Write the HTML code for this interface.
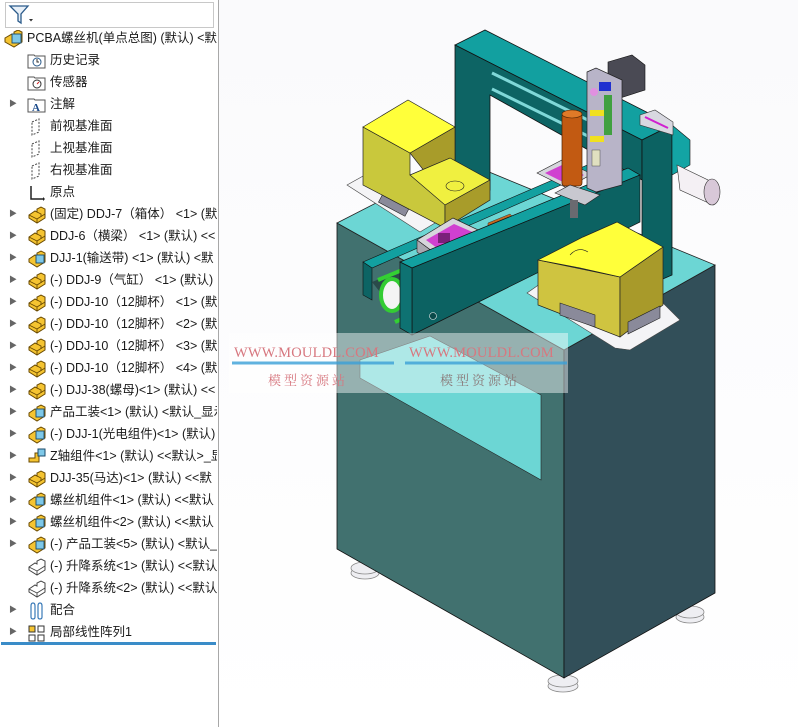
<!DOCTYPE html>
<html><head><meta charset="utf-8"><style>
html,body{margin:0;padding:0;width:798px;height:727px;overflow:hidden;background:#fff;}
body{position:relative;font-family:"Liberation Sans","Noto Sans CJK SC",sans-serif;}
#tree{position:absolute;left:0;top:0;width:218px;height:727px;background:#fff;border-right:1px solid #a8a8a8;}
#view{position:absolute;left:219px;top:0;width:579px;height:727px;background:linear-gradient(#fafafc,#ffffff);}
.filter{position:absolute;left:5px;top:2px;width:207px;height:24px;border:1px solid #c8c8c8;background:#fff;}
.row{position:absolute;left:0;height:22px;line-height:22px;font-size:12.5px;color:#1a1a1a;white-space:nowrap;width:217px;overflow:hidden;}
.row .t{position:absolute;top:0;}
.row .ar{position:absolute;left:9px;top:0;font-size:8px;color:#666;}
.row svg{position:absolute;top:3px;}
.wm{position:absolute;font-family:"Liberation Serif","Noto Serif CJK SC",serif;color:#d7777f;}
</style></head><body>
<div id="view">
<svg width="579" height="727" viewBox="219 0 579 727" style="position:absolute;left:0;top:0">
<g fill="#eeeef2" stroke="#888" stroke-width="0.8">
<ellipse cx="365" cy="573" rx="14" ry="6"/><ellipse cx="365" cy="568" rx="14" ry="6"/>
<ellipse cx="563" cy="686" rx="15" ry="6"/><ellipse cx="563" cy="681" rx="15" ry="6"/>
<ellipse cx="690" cy="617" rx="14" ry="6"/><ellipse cx="690" cy="612" rx="14" ry="6"/>
</g>
<polygon points="337,223 564,350 564,678 337,549" fill="#41716f" stroke="#111" stroke-width="0.8"/>
<polygon points="564,350 715,265 715,593 564,678" fill="#324f59" stroke="#111" stroke-width="0.8"/>
<polygon points="337,223 460,160 715,265 564,350" fill="#6cd6d4" stroke="#222" stroke-width="0.8"/>
<polygon points="360,378 541,480 541,395 430,336 360,360" fill="#6cd6d4" stroke="#222" stroke-width="0.6"/>
<polygon points="455,45 485,30 672,125 642,140" fill="#12a0a0" stroke="#111" stroke-width="0.8"/>
<polygon points="455,45 642,140 642,180 490,95 490,190 455,175" fill="#0d6464" stroke="#111" stroke-width="0.8"/>
<line x1="492" y1="73" x2="600" y2="126" stroke="#7fd8d8" stroke-width="3"/>
<line x1="492" y1="89" x2="600" y2="142" stroke="#7fd8d8" stroke-width="3"/>
<polygon points="642,140 672,125 672,275 642,288" fill="#0c6262" stroke="#111" stroke-width="0.8"/>
<polygon points="672,125 690,140 690,165 672,175" fill="#13a4a4" stroke="#111" stroke-width="0.6"/>
<polygon points="640,115 655,110 673,122 673,135 640,125" fill="#d8d8e0" stroke="#333" stroke-width="0.6"/>
<line x1="645" y1="117" x2="668" y2="128" stroke="#d020d0" stroke-width="2"/>
<polygon points="677,165 708,180 713,205 680,190" fill="#f4f0f4" stroke="#333" stroke-width="0.6"/>
<ellipse cx="712" cy="192" rx="8" ry="13" fill="#d8c8d8" stroke="#333" stroke-width="0.6"/>
<polygon points="347,185 365,175 440,220 420,232" fill="#f4f4f6" stroke="#444" stroke-width="0.6"/>
<rect x="380" y="196" width="30" height="14" fill="#8a8a9a" stroke="#222" stroke-width="0.6" transform="rotate(28 395 203)"/>
<polygon points="363,127 410,153 410,175 445,197 445,228 363,185" fill="#c9c83c" stroke="#222" stroke-width="0.7"/>
<polygon points="410,153 455,127 455,160 425,172" fill="#a89c2a" stroke="#222" stroke-width="0.7"/>
<polygon points="410,175 450,158 490,180 445,205" fill="#f0f040" stroke="#222" stroke-width="0.7"/>
<polygon points="445,205 490,180 490,200 445,228" fill="#a89c2a" stroke="#222" stroke-width="0.7"/>
<polygon points="363,127 408,100 455,127 410,153" fill="#ffff3a" stroke="#222" stroke-width="0.7"/>
<ellipse cx="455" cy="186" rx="9" ry="5" fill="none" stroke="#222" stroke-width="0.6"/>
<polygon points="363,262 592,163 600,168 372,268" fill="#12a0a0" stroke="#111" stroke-width="0.6"/>
<polygon points="363,262 372,268 372,300 363,295" fill="#0d6464" stroke="#111" stroke-width="0.6"/>
<polygon points="372,282 622,182 628,192 380,292" fill="#2a4a4a"/>
<line x1="378" y1="280" x2="625" y2="178" stroke="#33d033" stroke-width="4"/>
<line x1="395" y1="322" x2="630" y2="218" stroke="#33d033" stroke-width="4"/>
<ellipse cx="392" cy="295" rx="11" ry="16" fill="#f4f4f4" stroke="#33cc33" stroke-width="4"/>
<polygon points="417,240 453,218 493,237 448,263" fill="#d6d6dc" stroke="#222" stroke-width="0.7"/>
<polygon points="426,240 454,224 484,237 448,256" fill="#d040d0"/>
<polygon points="417,240 448,263 448,275 417,252" fill="#a8a8b0" stroke="#222" stroke-width="0.6"/>
<polygon points="448,263 493,237 493,249 448,275" fill="#8a8a94" stroke="#222" stroke-width="0.6"/>
<rect x="438" y="233" width="12" height="10" fill="#7a207a"/>
<polygon points="488,223 510,214 516,220 516,236 494,244 488,238" fill="#c66a22" stroke="#333" stroke-width="0.5"/>
<polygon points="537,173 562,160 592,174 567,188" fill="#d6d6dc" stroke="#222" stroke-width="0.6"/>
<polygon points="545,173 562,165 584,175 567,184" fill="#d040d0"/>
<polygon points="400,262 628,168 640,175 412,268" fill="#12a0a0" stroke="#111" stroke-width="0.7"/>
<polygon points="412,268 640,175 640,222 412,335" fill="#0c6262" stroke="#111" stroke-width="0.7"/>
<polygon points="400,262 412,268 412,335 400,328" fill="#0e7272" stroke="#111" stroke-width="0.7"/>
<circle cx="433" cy="316" r="3.5" fill="#0a4a4a" stroke="#eee" stroke-width="0.6"/>
<polygon points="608,62 632,55 645,65 645,90 620,98 608,90" fill="#4a4a54" stroke="#111" stroke-width="0.6"/>
<polygon points="587,72 596,68 622,80 622,185 596,192 587,188" fill="#b8b4c8" stroke="#222" stroke-width="0.7"/>
<rect x="599" y="82" width="12" height="9" fill="#2030d0"/>
<rect x="590" y="110" width="14" height="6" fill="#f0e020"/>
<rect x="590" y="136" width="14" height="6" fill="#f0e020"/>
<rect x="604" y="95" width="8" height="40" fill="#40a040"/>
<circle cx="594" cy="92" r="4" fill="#e090e0"/>
<rect x="592" y="150" width="8" height="16" fill="#e0e0c0" stroke="#333" stroke-width="0.4"/>
<rect x="562" y="113" width="20" height="73" rx="3" fill="#c25a12" stroke="#4a2000" stroke-width="0.7"/>
<ellipse cx="572" cy="114" rx="10" ry="4" fill="#e07a28" stroke="#4a2000" stroke-width="0.6"/>
<polygon points="555,193 570,185 600,195 585,205" fill="#c8c8d0" stroke="#222" stroke-width="0.6"/>
<rect x="570" y="200" width="8" height="18" fill="#6a6a70"/>
<polygon points="527,293 615,348 630,350 680,320 660,300 560,270" fill="#f4f4f6" stroke="#444" stroke-width="0.6"/>
<polygon points="538,260 620,277 620,337 538,305" fill="#cfc440" stroke="#222" stroke-width="0.7"/>
<polygon points="620,277 663,247 663,305 620,337" fill="#a89a2a" stroke="#222" stroke-width="0.7"/>
<polygon points="538,260 583,237 617,222 663,247 620,277 580,268" fill="#ffff3a" stroke="#222" stroke-width="0.7"/>
<path d="M570,255 Q578,246 588,252" fill="none" stroke="#222" stroke-width="0.6"/>
<polygon points="560,303 595,315 595,327 560,315" fill="#8a8a9a" stroke="#222" stroke-width="0.6"/>
<polygon points="628,322 660,306 660,318 628,334" fill="#8a8a9a" stroke="#222" stroke-width="0.6"/>
<rect x="229" y="333" width="339" height="60" fill="#ffffff" fill-opacity="0.45"/>
<line x1="232" y1="363" x2="394" y2="363" stroke="#3aa0d8" stroke-width="3" opacity="0.8"/>
<line x1="405" y1="363" x2="567" y2="363" stroke="#3aa0d8" stroke-width="3" opacity="0.8"/>
</svg>
<div class="wm" style="left:15px;top:345px;font-size:14.5px;letter-spacing:0.2px">WWW.MOULDL.COM</div>
<div class="wm" style="left:190px;top:345px;font-size:14.5px;letter-spacing:0.2px">WWW.MOULDL.COM</div>
<div class="wm" style="left:49px;top:370px;font-size:13px;letter-spacing:3px">模型资源站</div>
<div class="wm" style="left:221px;top:370px;font-size:13px;letter-spacing:3px;color:#8a7878">模型资源站</div>
</div>

<div id="tree">
<div class="filter"><svg width="26" height="24" style="position:absolute;left:2px;top:0px"><path d="M2,3 H20 L13,11 V20 L10,18 V11 Z" fill="#e8f0f8" stroke="#2a5a8a" stroke-width="1.3"/><path d="M21,16 l4,0 l-2,2.5z" fill="#333"/></svg></div>
<div id="rows"></div>
<div style="position:absolute;left:1px;top:642px;width:215px;height:3px;background:#3a8cc8"></div>
</div>

<script>
var items=[
["PCBA螺丝机(单点总图)  (默认)  <默",0,"asmb",0],
["历史记录",1,"hist",0],["传感器",1,"sens",0],["注解",1,"anno",1],
["前视基准面",1,"plane",0],["上视基准面",1,"plane",0],["右视基准面",1,"plane",0],["原点",1,"orig",0],
["(固定) DDJ-7（箱体） <1> (默认",1,"part",1],["DDJ-6（横梁） <1> (默认) <<",1,"part",1],
["DJJ-1(输送带) <1> (默认) <默",1,"asm",1],["(-) DDJ-9（气缸） <1> (默认)",1,"part",1],
["(-) DDJ-10（12脚杯） <1> (默",1,"part",1],["(-) DDJ-10（12脚杯） <2> (默",1,"part",1],
["(-) DDJ-10（12脚杯） <3> (默",1,"part",1],["(-) DDJ-10（12脚杯） <4> (默",1,"part",1],
["(-) DJJ-38(螺母)<1> (默认) <<",1,"part",1],["产品工装<1> (默认) <默认_显示",1,"asm",1],
["(-) DJJ-1(光电组件)<1> (默认)",1,"asm",1],["Z轴组件<1> (默认) <<默认>_显",1,"zax",1],
["DJJ-35(马达)<1> (默认) <<默",1,"part",1],["螺丝机组件<1> (默认) <<默认",1,"asm",1],
["螺丝机组件<2> (默认) <<默认",1,"asm",1],["(-) 产品工装<5> (默认) <默认_",1,"asm",1],
["(-) 升降系统<1> (默认) <<默认",1,"wire",0],["(-) 升降系统<2> (默认) <<默认",1,"wire",0],
["配合",1,"mate",1],["局部线性阵列1",1,"pat",1]];
var ic={
part:'<path d="M2,9 L8,5 L10,6 L10,3 L14,1 L18,3 L18,12 L10,17 L2,12 Z" fill="#f5c431" stroke="#6a4a00" stroke-width="1"/><path d="M2,9 L10,13 L10,17 M10,13 L18,8 M10,6 L14,8 L14,11" fill="none" stroke="#6a4a00" stroke-width="0.9"/>',
asm:'<path d="M2,9 L8,5 L10,6 L10,3 L14,1 L18,3 L18,12 L10,17 L2,12 Z" fill="#f5c431" stroke="#6a4a00" stroke-width="1"/><rect x="9" y="5" width="8" height="8" fill="#7ec8e8" stroke="#1a4a6a" stroke-width="0.9"/>',
asmb:'<path d="M1,8 L8,4 L10,5 L10,2 L14,0 L18,2 L18,12 L10,17 L1,12 Z" fill="#f5c431" stroke="#6a4a00" stroke-width="1"/><rect x="8" y="4" width="9" height="9" fill="#7ec8e8" stroke="#1a4a6a" stroke-width="0.9"/>',
wire:'<path d="M2,9 L8,5 L10,6 L10,3 L14,1 L18,3 L18,12 L10,17 L2,12 Z" fill="#fff" stroke="#444" stroke-width="1"/><path d="M2,9 L10,13 L10,17 M10,13 L18,8" fill="none" stroke="#444" stroke-width="0.9"/>',
zax:'<path d="M2,10 L8,10 L8,5 L12,5 L12,14 L2,14 Z" fill="#f5c431" stroke="#6a4a00"/><rect x="11" y="1" width="7" height="7" fill="#7ec8e8" stroke="#1a4a6a"/>',
hist:'<path d="M1,3 H7 L8,4 H18 V16 H1 Z" fill="#fff" stroke="#555"/><circle cx="10" cy="10" r="4" fill="#fff" stroke="#2a5a8a"/><path d="M10,7 V10 H12" stroke="#333" fill="none"/>',
sens:'<path d="M1,3 H7 L8,4 H18 V16 H1 Z" fill="#fff" stroke="#555"/><circle cx="10" cy="10" r="4" fill="#fff" stroke="#333"/><path d="M10,10 L12,8" stroke="#d02020"/>',
anno:'<path d="M1,3 H7 L8,4 H18 V16 H1 Z" fill="#fff" stroke="#555"/><text x="5" y="15" font-size="11" font-family="Liberation Serif" font-weight="bold" fill="#1a4a8a">A</text>',
plane:'<path d="M5,4 L12,1 L12,14 L5,17 Z" fill="none" stroke="#444" stroke-dasharray="2,1.5"/>',
orig:'<path d="M4,2 V15 H16" fill="none" stroke="#222" stroke-width="1.5"/><path d="M16,13 L18,15 L16,17 Z" fill="#222"/>',
mate:'<path d="M4,4 Q4,1 6,1 Q8,1 8,4 V15 Q8,17 6,17 Q4,17 4,15 Z M11,4 Q11,1 13,1 Q15,1 15,4 V15 Q15,17 13,17 Q11,17 11,15 Z" fill="none" stroke="#3a7ab8" stroke-width="1.2"/>',
pat:'<rect x="2" y="2" width="6" height="6" fill="#f5c431" stroke="#333"/><rect x="11" y="2" width="6" height="6" fill="none" stroke="#333"/><rect x="2" y="11" width="6" height="6" fill="none" stroke="#333"/><rect x="11" y="11" width="6" height="6" fill="none" stroke="#333"/>'};
var h='';
items.forEach(function(it,i){var y=27+i*22;var ix=it[1]?27:4;var tx=it[1]?50:27;
h+='<div class="row" style="top:'+y+'px">'+(it[3]?'<span class="ar">&#9654;</span>':'')+'<svg width="20" height="18" style="left:'+ix+'px">'+ic[it[2]]+'</svg><span class="t" style="left:'+tx+'px">'+it[0].replace(/</g,'&lt;').replace(/>/g,'&gt;')+'</span></div>';});
document.getElementById('rows').innerHTML=h;
</script>
</body></html>
